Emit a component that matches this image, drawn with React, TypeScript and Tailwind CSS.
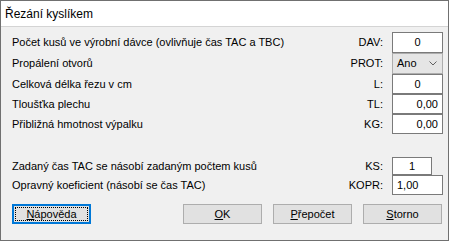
import type { ReactNode } from "react";

const font = { fontFamily: '"Liberation Sans", Arial, sans-serif' };

const Field = ({ children, align, w = "w-[51px]", h = "h-[20px]" }: { children: ReactNode; align: string; w?: string; h?: string }) => (
  <div className={`${w} ${h} bg-white border border-[#7a7a7a] flex items-center px-[4px] ${align}`}>
    {children}
  </div>
);

const Row = ({ label, code, h, children }: { label: string; code: string; h: string; children: ReactNode }) => (
  <div className={`flex items-center ${h}`}>
    <span className="flex-1">{label}</span>
    <span className="w-[80px] text-right mr-[9px]">{code}</span>
    {children}
  </div>
);

const Btn = ({ first, rest, focused }: { first: string; rest: string; focused?: boolean }) => (
  <button
    className={`relative w-[79px] h-[20px] flex items-center justify-center bg-[#e1e1e1] ${
      focused ? "border-2 border-[#0078d7]" : "border border-[#adadad]"
    }`}
  >
    {focused && <span className="absolute inset-[1px] border border-dotted border-black" />}
    <span>
      <u className="underline-offset-[1px]">{first}</u>
      {rest}
    </span>
  </button>
);

export default function App() {
  return (
    <div className="w-[450px] h-[242px] bg-white text-black text-[11px] leading-none" style={font}>
      <div className="w-[449px] h-[241px] border border-[#707070] flex flex-col">
        <div className="h-[26px] bg-white border-b border-[#d4d4d4] flex items-center pl-[4px] text-[12px]">
          Řezání kyslíkem
        </div>
        <div className="flex-1 bg-[#f0f0f0] pl-[11px] pr-[5px] pt-[5px] flex flex-col">
          <Row label="Počet kusů ve výrobní dávce (ovlivňuje čas TAC a TBC)" code="DAV:" h="h-[21px]">
            <Field align="justify-center" h="h-[21px]">0</Field>
          </Row>
          <Row label="Propálení otvorů" code="PROT:" h="h-[21px]">
            <div className="w-[51px] h-[21px] bg-[#e5e5e5] border border-[#adadad] flex items-center justify-between pl-[4px] pr-[5px]">
              <span>Ano</span>
              <svg width="8" height="5" viewBox="0 0 8 5" fill="none" stroke="#606060" strokeWidth="1">
                <path d="M0.5 0.5 L4 4 L7.5 0.5" />
              </svg>
            </div>
          </Row>
          <Row label="Celková délka řezu v cm" code="L:" h="h-[20px]">
            <Field align="justify-center">0</Field>
          </Row>
          <Row label="Tloušťka plechu" code="TL:" h="h-[20px]">
            <Field align="justify-end">0,00</Field>
          </Row>
          <Row label="Přibližná hmotnost výpalku" code="KG:" h="h-[20px]">
            <Field align="justify-end">0,00</Field>
          </Row>
          <div className="h-[23px]" />
          <Row label="Zadaný čas TAC se násobí zadaným počtem kusů" code="KS:" h="h-[18px]">
            <div className="w-[51px] flex">
              <Field align="justify-center" w="w-[40px]" h="h-[18px]">1</Field>
            </div>
          </Row>
          <Row label="Opravný koeficient (násobí se čas TAC)" code="KOPR:" h="h-[20px]">
            <Field align="justify-start">1,00</Field>
          </Row>
          <div className="flex items-center mt-[9px] pr-[1px]">
            <Btn first="N" rest="ápověda" focused />
            <div className="flex-1" />
            <div className="flex gap-[11px]">
              <Btn first="O" rest="K" />
              <Btn first="P" rest="řepočet" />
              <Btn first="S" rest="torno" />
            </div>
          </div>
        </div>
      </div>
    </div>
  );
}
